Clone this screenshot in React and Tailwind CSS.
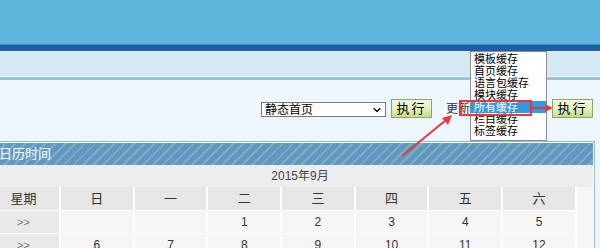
import { ChevronDown } from 'lucide-react'

const cacheItems = ['模板缓存', '首页缓存', '语言包缓存', '模块缓存', '所有缓存', '栏目缓存', '标签缓存']
const weekDays = ['日', '一', '二', '三', '四', '五', '六']
const rows = [
  ['', '', '1', '2', '3', '4', '5'],
  ['6', '7', '8', '9', '10', '11', '12'],
]

function RunButton() {
  return (
    <button
      type="button"
      className="h-[19px] w-[41px] border border-[#8fa46a] bg-gradient-to-b from-[#f1f9de] via-[#e4f2c2] to-[#c2de85] text-[13px] leading-none tracking-[2px] text-black"
    >
      执行
    </button>
  )
}

export default function App() {
  return (
    <div className="relative h-[248px] w-[600px] overflow-hidden bg-[#eef6fd] font-['Liberation_Sans','Noto_Sans_CJK_SC',sans-serif] text-[12px] text-[#333]">
      {/* top bars */}
      <div className="h-[44px] bg-[#5db5dc]" />
      <div className="h-px bg-[#3e8fb1]" />
      <div className="h-[6px] bg-[#1d5dac]" />
      <div className="h-px bg-[#e6f2f6]" />
      <div className="h-[24px] bg-[#d5e9f0]" />
      <div className="h-px bg-[#eef6f9]" />
      <div className="h-[3px] bg-[#95c6d6]" />

      {/* toolbar */}
      <div className="flex h-[61px] items-start justify-end pr-[7px] pt-[19px]">
        <div className="mt-[3px] flex h-[15px] w-[125px] items-center justify-between border border-[#7a7a7a] bg-white pl-[3px] pr-[2px] text-[12px] leading-none text-black">
          <span>静态首页</span>
          <ChevronDown className="h-[12px] w-[12px]" strokeWidth={2.5} />
        </div>
        <div className="ml-[5px]">
          <RunButton />
        </div>
        <span className="ml-[14px] mt-[3px] w-[24px] whitespace-nowrap text-[12px] leading-[14px] text-[#333]">更新</span>
        <div className="w-[76px]" />
        <div className="ml-[6px]">
          <RunButton />
        </div>
      </div>

      {/* calendar panel */}
      <div className="ml-[-12px] w-[607px] border-r border-t border-[#8db8d8] bg-white pr-px pt-px">
        <div className="flex h-[22px] items-center bg-[repeating-linear-gradient(135deg,#6098be_0px,#6098be_5px,#7badcd_5px,#7badcd_7px)] pl-[11px] text-[13px] text-white">
          日历时间
        </div>
        <div className="flex h-[22px] items-center justify-center bg-[#ededed] pl-[19px] text-[12px] text-[#444]">
          2015年9月
        </div>
        <div className="bg-[#f6f6f6]">
          <div className="grid w-[589px] grid-cols-[71px_repeat(7,71.7px)] gap-x-[2px] gap-y-px bg-white">
            <div className="flex h-[23px] items-center justify-center bg-[#e6e6e6] text-[13px]">星期</div>
            {weekDays.map((d) => (
              <div key={d} className="flex h-[23px] items-center justify-center bg-[#e6e6e6] text-[13px]">
                {d}
              </div>
            ))}
            {rows.map((row, i) => [
              <div key={`w${i}`} className="flex h-[22px] items-center justify-center bg-[#e9e9e9] text-[11px] text-[#777]">
                &gt;&gt;
              </div>,
              ...row.map((n, j) => (
                <div key={`${i}-${j}`} className="flex h-[22px] items-center justify-center bg-[#f5f5f5] text-[12px] text-[#333]">
                  {n}
                </div>
              )),
            ])}
          </div>
        </div>
      </div>

      {/* open dropdown list */}
      <div className="absolute left-[470px] top-[51px] h-[90px] w-[77px] border border-[#8c8c8c] bg-white pt-px">
        {cacheItems.map((item) => (
          <div
            key={item}
            className={
              item === '所有缓存'
                ? 'h-[12px] overflow-hidden bg-[#3399e0] pl-[3px] text-[11px] leading-[12px] text-white'
                : 'h-[12px] overflow-hidden pl-[3px] text-[11px] leading-[12px] text-black'
            }
          >
            {item}
          </div>
        ))}
      </div>

      {/* red annotation */}
      <div className="absolute left-[459px] top-[100px] h-[16px] w-[73px] border-2 border-[#e8373b]" />
      <svg className="pointer-events-none absolute left-0 top-0" width="600" height="248">
        <line x1="532" y1="108" x2="546" y2="108" stroke="#e8373b" strokeWidth="2" />
        <polygon points="553,108 545,104 545,112" fill="#e8373b" />
        <line x1="402" y1="156" x2="446" y2="120" stroke="#e8373b" strokeWidth="2" />
        <polygon points="452,115 442,118 448,125" fill="#e8373b" />
      </svg>
    </div>
  )
}
